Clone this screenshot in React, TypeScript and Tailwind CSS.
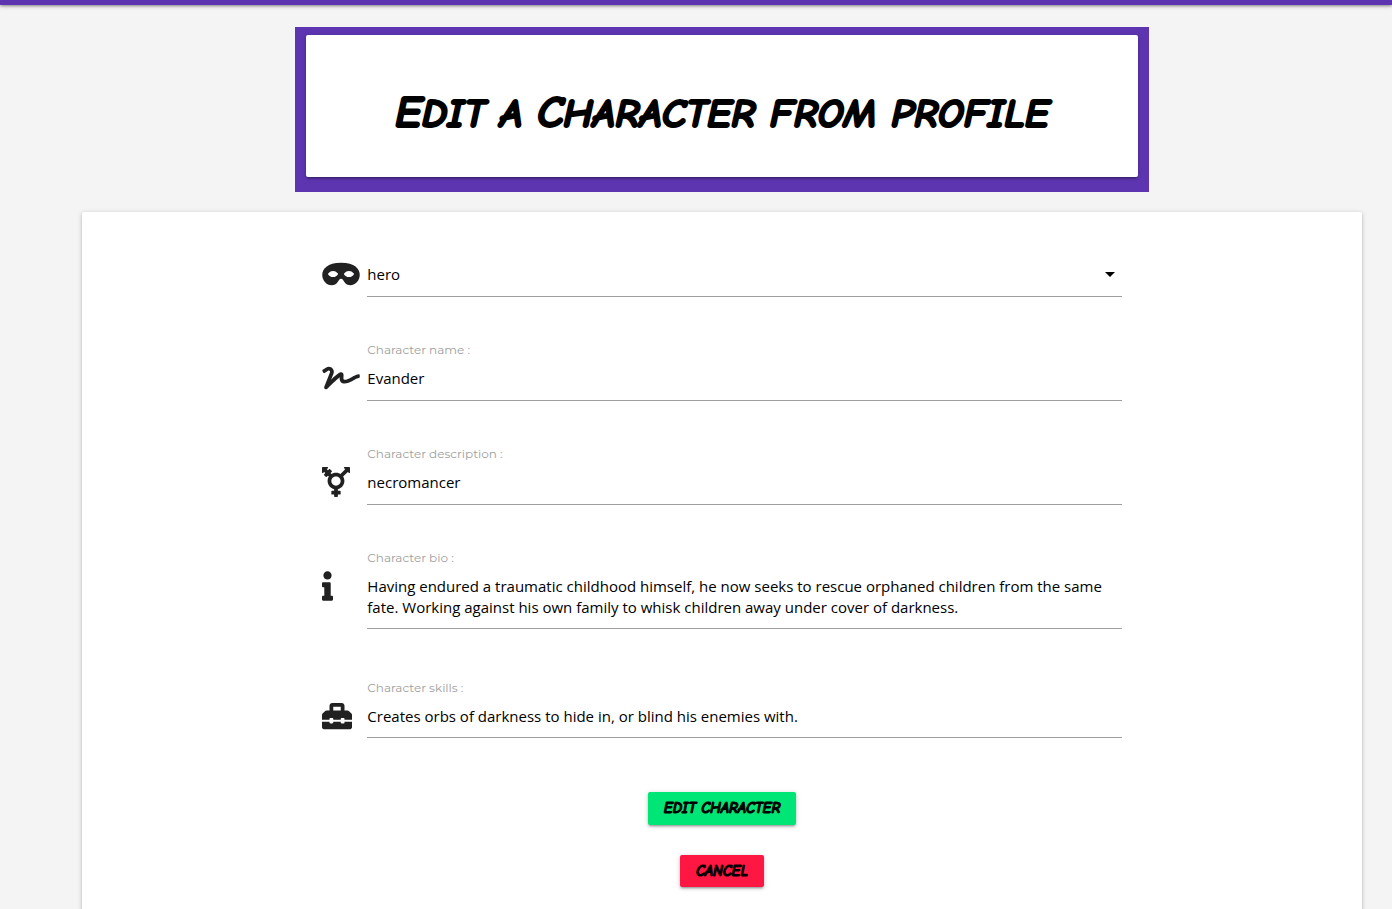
import type { ReactNode } from "react";
import { FaInfo, FaMask, FaSignature, FaToolbox, FaTransgenderAlt } from "react-icons/fa";
import { MdArrowDropDown } from "react-icons/md";

const control =
  "block w-full appearance-none rounded-none border-b border-[#9e9e9e] bg-transparent pt-2 pb-[11px] text-[15px] leading-[21px] text-black outline-none focus:border-[#5e35b1]";
const areaControl =
  "block w-full resize-none field-sizing-content overflow-hidden rounded-none border-b border-[#9e9e9e] bg-transparent pt-2 pb-[10px] text-[15px] leading-[21px] text-black outline-none focus:border-[#5e35b1]";
const shadow =
  "shadow-[0_2px_2px_0_rgba(0,0,0,0.14),0_3px_1px_-2px_rgba(0,0,0,0.12),0_1px_5px_0_rgba(0,0,0,0.2)]";
const marker = "font-['Permanent_Marker','Comic_Neue','Caveat_Brush',cursive] font-black italic uppercase";
const buttonStyle = "rounded-[2px] px-4 text-[15px] [-webkit-text-stroke:1px_black]";

function Field({ id, label, icon, children }: { id: string; label?: string; icon: ReactNode; children: ReactNode }) {
  return (
    <div className="grid grid-cols-[45px_minmax(0,1fr)]">
      {label && (
        <label
          htmlFor={id}
          className="col-start-2 font-['Montserrat','Inter',sans-serif] text-[12px] leading-5 text-[#9e9e9e]"
        >
          {label}
        </label>
      )}
      <span className="col-start-1 mt-[3px] text-[#212121]" aria-hidden="true">
        {icon}
      </span>
      <div className="relative">{children}</div>
    </div>
  );
}

export default function App() {
  return (
    <div className="min-h-screen bg-[#f4f4f4] font-['Segoe_UI','Open_Sans',sans-serif] text-black">
      <nav className={`h-[5px] bg-[#5e35b1] ${shadow}`} />
      <main className="pt-[22px] pl-[52px]">
        <div className="mx-auto w-full max-w-[1280px]">
          <header className="mx-auto w-2/3 bg-[#5e35b1] px-[11px] pt-2 pb-[15px]">
            <div className={`rounded-[2px] bg-white px-6 pt-[46px] pb-[30px] text-center ${shadow}`}>
              <h1
                className={`text-[41px] leading-[66px] [-webkit-text-stroke:2px_black] first-letter:text-[45px] first-letter:leading-none ${marker}`}
              >
                Edit a <span className="text-[45px] leading-none">C</span>haracter from profile
              </h1>
            </div>
          </header>

          <section className={`mt-5 rounded-[2px] bg-white pt-11 pb-10 ${shadow}`}>
            <form className="mx-auto w-2/3 px-[27px]" onSubmit={(e) => e.preventDefault()}>
              <div className="flex flex-col gap-[43px]">
                <Field id="type" icon={<FaMask className="h-[30px] w-[38px]" />}>
                  <select id="type" aria-label="Character type" defaultValue="hero" className={control}>
                    <option value="hero">hero</option>
                    <option value="villain">villain</option>
                  </select>
                  <MdArrowDropDown className="pointer-events-none absolute top-[6px] right-0 size-6" />
                </Field>
                <Field id="name" label="Character name :" icon={<FaSignature className="h-[30px] w-[38px]" />}>
                  <input id="name" type="text" defaultValue="Evander" className={control} />
                </Field>
                <Field
                  id="description"
                  label="Character description :"
                  icon={<FaTransgenderAlt className="h-[30px] w-[28px]" />}
                >
                  <input id="description" type="text" defaultValue="necromancer" className={control} />
                </Field>
                <Field id="bio" label="Character bio :" icon={<FaInfo className="h-[30px] w-[11px]" />}>
                  <textarea
                    id="bio"
                    rows={2}
                    className={areaControl}
                    defaultValue="Having endured a traumatic childhood himself, he now seeks to rescue orphaned children from the same fate. Working against his own family to whisk children away under cover of darkness."
                  />
                </Field>
              </div>
              <div className="mt-[49px]">
                <Field id="skills" label="Character skills :" icon={<FaToolbox className="size-[30px]" />}>
                  <textarea
                    id="skills"
                    rows={1}
                    className={areaControl}
                    defaultValue="Creates orbs of darkness to hide in, or blind his enemies with."
                  />
                </Field>
              </div>
              <div className="mt-[54px] flex flex-col items-center gap-[30px]">
                <button type="submit" className={`bg-[#00e676] leading-[33px] ${buttonStyle} ${marker} ${shadow}`}>
                  Edit Character
                </button>
                <button type="button" className={`bg-[#ff1744] leading-8 ${buttonStyle} ${marker} ${shadow}`}>
                  Cancel
                </button>
              </div>
            </form>
          </section>
        </div>
      </main>
    </div>
  );
}
